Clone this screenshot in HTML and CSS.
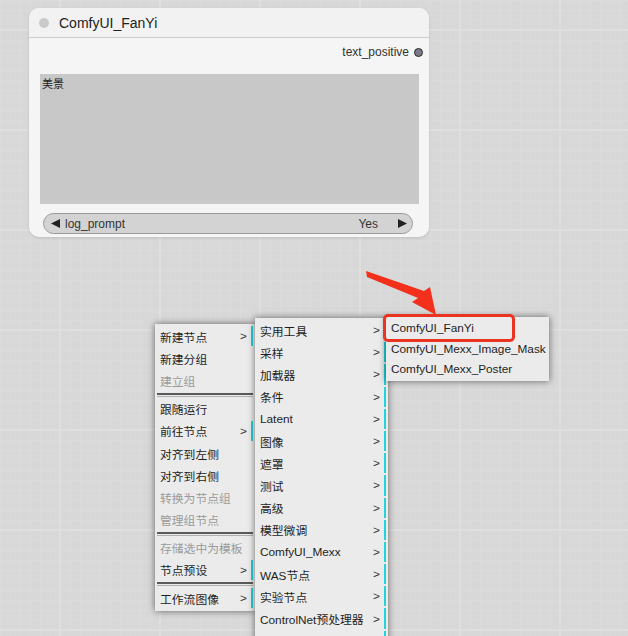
FILE: index.html
```html
<!DOCTYPE html>
<html>
<head>
<meta charset="utf-8">
<link rel="stylesheet" href="styles.css">
</head>
<body>
<div class="canvas">
  <div class="node">
    <div class="node-title">
      <span class="title-dot"></span>
      <span class="title-text">ComfyUI_FanYi</span>
    </div>
    <div class="node-body">
      <div class="output-row">
        <span class="output-label">text_positive</span>
        <span class="slot-dot"></span>
      </div>
      <div class="textarea">美景</div>
      <div class="combo">
        <svg class="tri" width="10" height="9" viewBox="0 0 10 9"><polygon points="0,4.5 9,0 9,9" fill="#222"/></svg>
        <span class="combo-label">log_prompt</span>
        <span class="combo-value">Yes</span>
        <svg class="tri" width="10" height="9" viewBox="0 0 10 9"><polygon points="10,4.5 1,0 1,9" fill="#222"/></svg>
      </div>
    </div>
  </div>

  <div class="menu menu-main">
    <div class="entry sub">新建节点</div>
    <div class="entry">新建分组</div>
    <div class="entry disabled">建立组</div>
    <div class="sep"></div>
    <div class="entry">跟随运行</div>
    <div class="entry sub">前往节点</div>
    <div class="entry">对齐到左侧</div>
    <div class="entry">对齐到右侧</div>
    <div class="entry disabled">转换为节点组</div>
    <div class="entry disabled">管理组节点</div>
    <div class="sep"></div>
    <div class="entry disabled">存储选中为模板</div>
    <div class="entry sub">节点预设</div>
    <div class="sep"></div>
    <div class="entry sub">工作流图像</div>
  </div>

  <div class="menu menu-sub">
    <div class="entry sub">实用工具</div>
    <div class="entry sub">采样</div>
    <div class="entry sub">加载器</div>
    <div class="entry sub">条件</div>
    <div class="entry sub">Latent</div>
    <div class="entry sub">图像</div>
    <div class="entry sub">遮罩</div>
    <div class="entry sub">测试</div>
    <div class="entry sub">高级</div>
    <div class="entry sub">模型微调</div>
    <div class="entry sub">ComfyUI_Mexx</div>
    <div class="entry sub">WAS节点</div>
    <div class="entry sub">实验节点</div>
    <div class="entry sub">ControlNet预处理器</div>
    <div class="entry sub">其他节点</div>
  </div>

  <div class="menu menu-sub2">
    <div class="entry small">ComfyUI_FanYi</div>
    <div class="entry small">ComfyUI_Mexx_Image_Mask</div>
    <div class="entry small">ComfyUI_Mexx_Poster</div>
  </div>

  <div class="highlight"></div>

  <svg class="red-arrow" width="628" height="636" viewBox="0 0 628 636">
    <polygon points="366,271 424,291 430,287 436,315 412,302 418,298 367,277" fill="#f2301b"/>
  </svg>
</div>
</body>
</html>
```

FILE: styles.css
```css
html, body {
  margin: 0;
  padding: 0;
}

body {
  width: 628px;
  height: 636px;
  overflow: hidden;
  font-family: "Liberation Sans", "Noto Sans CJK SC", sans-serif;
}

.canvas {
  position: relative;
  width: 628px;
  height: 636px;
  overflow: hidden;
  background-color: #d8d8d8;
  background-image:
    linear-gradient(to right, #dfdfdf 2px, transparent 2px),
    linear-gradient(to bottom, #dfdfdf 2px, transparent 2px),
    linear-gradient(to right, #dbdbdb 1px, transparent 1px),
    linear-gradient(to bottom, #dbdbdb 1px, transparent 1px);
  background-size: 100px 100px, 100px 100px, 10px 10px, 10px 10px;
  background-position: 59px 0, 0 29px, 0 0, 0 0;
}

/* ---------- node ---------- */
.node {
  position: absolute;
  left: 29px;
  top: 8px;
  width: 400px;
  height: 229px;
  box-sizing: border-box;
  border-radius: 10px;
  background: #f5f5f5;
  box-shadow: 0 1px 3px rgba(0, 0, 0, 0.12);
  display: flex;
  flex-direction: column;
  overflow: hidden;
}

.node-title {
  height: 30px;
  flex: none;
  display: flex;
  align-items: center;
  padding-left: 10px;
  background: #f2f2f2;
  border-bottom: 1px solid #cdcdcd;
  box-sizing: border-box;
}

.title-dot {
  width: 10px;
  height: 10px;
  border-radius: 50%;
  background: #cacaca;
  margin-right: 10px;
}

.title-text {
  font-size: 14px;
  color: #222;
}

.node-body {
  display: flex;
  flex-direction: column;
  padding: 0 0 2px 0;
}

.output-row {
  height: 20px;
  margin-top: 4px;
  display: flex;
  align-items: center;
  justify-content: flex-end;
  padding-right: 6px;
}

.output-label {
  font-size: 12px;
  color: #333;
  margin-right: 5px;
}

.slot-dot {
  width: 7px;
  height: 7px;
  border-radius: 50%;
  background: #7a7a8a;
  border: 1px solid #2a2a2a;
}

.textarea {
  margin: 12px 10px 0 11px;
  height: 130px;
  background: #c8c8c8;
  font-size: 11px;
  color: #222;
  padding: 3px 2px 0;
  box-sizing: border-box;
  line-height: 14px;
}

.combo {
  margin: 9px 16px 0 14px;
  height: 21px;
  box-sizing: border-box;
  border: 1px solid #9a9a9a;
  border-radius: 11px;
  background: #d3d3d3;
  display: flex;
  align-items: center;
  padding: 0 5px 0 7px;
  font-size: 12px;
  color: #333;
}

.tri {
  flex: none;
  display: block;
}

.combo-label {
  margin-left: 4px;
  flex: 1;
}

.combo-value {
  margin-right: 19px;
}

/* ---------- context menus ---------- */
.menu {
  position: absolute;
  box-sizing: border-box;
  background: #ebebeb;
  box-shadow: 0 0 7px rgba(0, 0, 0, 0.55);
  display: flex;
  flex-direction: column;
  padding: 0 2px 3px;
  font-family: "Liberation Sans", "Noto Sans CJK SC", sans-serif;
  font-size: 11.8px;
  color: #1e1e1e;
}

.menu-main {
  left: 155px;
  top: 324px;
  width: 100px;
}

.menu-sub {
  left: 255px;
  top: 318px;
  width: 133px;
}

.menu-sub2 {
  left: 386px;
  top: 317px;
  width: 163px;
  padding-bottom: 2px;
}

.entry {
  margin-top: 2px;
  height: 20.2px;
  flex: none;
  display: flex;
  align-items: center;
  padding-left: 3px;
  white-space: nowrap;
}

.entry.small {
  height: 18.5px;
}

.entry.sub {
  border-right: 2px solid #22d3dd;
}

.entry.sub::after {
  content: ">";
  margin-left: auto;
  margin-right: 4px;
  color: #333;
}

.entry.disabled {
  color: #9a9a9a;
}

.sep {
  margin-top: 2px;
  height: 1px;
  border-top: 2px solid #5a5a5a;
  border-bottom: 1px solid #b0b0b0;
  flex: none;
}

.highlight {
  position: absolute;
  left: 383px;
  top: 314px;
  width: 132px;
  height: 28px;
  box-sizing: border-box;
  border: 3px solid #ea3320;
  border-radius: 5px;
}

.red-arrow {
  position: absolute;
  left: 0;
  top: 0;
  pointer-events: none;
}
```
